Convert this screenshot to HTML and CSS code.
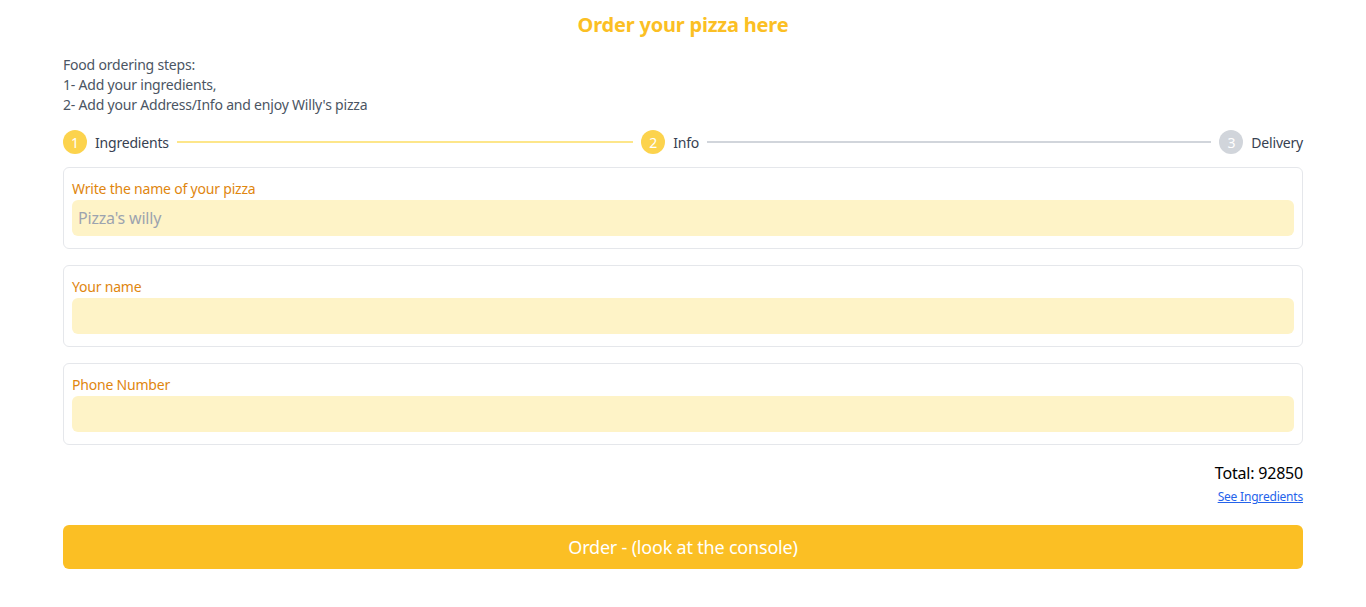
FILE: index.html
```html
<!DOCTYPE html>
<html lang="en">
<head>
<meta charset="utf-8">
<title>Order your pizza</title>
<link rel="stylesheet" href="styles.css">
</head>
<body>
<main class="page">
  <h1 class="title">Order your pizza here</h1>
  <div class="intro">
    <p>Food ordering steps:</p>
    <p>1- Add your ingredients,</p>
    <p>2- Add your Address/Info and enjoy Willy's pizza</p>
  </div>
  <div class="stepper">
    <div class="step grow"><span class="dot active">1</span><span class="step-label">Ingredients</span><span class="bar active"></span></div>
    <div class="step grow"><span class="dot active">2</span><span class="step-label">Info</span><span class="bar"></span></div>
    <div class="step"><span class="dot">3</span><span class="step-label">Delivery</span></div>
  </div>
  <div class="card">
    <label class="field-label">Write the name of your pizza</label>
    <input class="field-input" type="text" placeholder="Pizza's willy">
  </div>
  <div class="card">
    <label class="field-label">Your name</label>
    <input class="field-input" type="text">
  </div>
  <div class="card">
    <label class="field-label">Phone Number</label>
    <input class="field-input" type="text">
  </div>
  <div class="summary">
    <div class="total">Total: 92850</div>
    <a class="see" href="#">See Ingredients</a>
  </div>
  <button class="order">Order - (look at the console)</button>
</main>
</body>
</html>
```
FILE: styles.css
```css
* { box-sizing: border-box; }
body {
  margin: 0;
  background: #fff;
  font-family: "Noto Sans", "Open Sans", sans-serif;
  color: #4b5563;
  letter-spacing: -0.2px;
}
.page {
  width: 1240px;
  margin: 0 auto;
  padding-top: 11px;
  display: flex;
  flex-direction: column;
}
.title {
  margin: 0;
  text-align: center;
  font-size: 20px;
  line-height: 28px;
  font-weight: 700;
  color: #fbbf24;
}
.intro {
  margin-top: 16px;
  font-size: 14px;
  line-height: 20px;
}
.intro p { margin: 0; }
.stepper {
  margin-top: 15px;
  display: flex;
  align-items: center;
  gap: 8px;
  height: 24px;
}
.step {
  display: flex;
  align-items: center;
  gap: 8px;
  font-size: 14px;
  color: #374151;
}
.step.grow { flex: 1; }
.dot {
  flex: none;
  width: 24px;
  height: 24px;
  border-radius: 50%;
  background: #d1d5db;
  color: #fff;
  font-size: 14px;
  display: flex;
  align-items: center;
  justify-content: center;
}
.dot.active { background: #fcd34d; }
.bar {
  flex: 1;
  height: 2px;
  background: #d1d5db;
}
.bar.active { background: #fde68a; }
.card {
  margin-top: 13px;
  border: 1px solid #e5e7eb;
  border-radius: 6px;
  padding: 11px 8px 12px 8px;
  display: flex;
  flex-direction: column;
  gap: 1px;
}
.card + .card { margin-top: 16px; }
.field-label {
  font-size: 14px;
  line-height: 20px;
  color: #e0860f;
}
.field-input {
  height: 36px;
  border: none;
  border-radius: 6px;
  background: #fef3c7;
  padding: 0 6px;
  font-family: inherit;
  font-size: 16px;
  letter-spacing: inherit;
  color: #374151;
  outline: none;
}
.field-input::placeholder { color: #9ca3af; }
.summary {
  margin-top: 16px;
  display: flex;
  flex-direction: column;
  align-items: flex-end;
}
.total {
  font-size: 16px;
  line-height: 24px;
  color: #000;
}
.see {
  margin-top: 4px;
  font-size: 12px;
  line-height: 16px;
  color: #2563eb;
  text-decoration: underline;
}
.order {
  margin-top: 20px;
  height: 44px;
  border: none;
  border-radius: 6px;
  background: #fbbf24;
  color: #fff;
  font-family: inherit;
  letter-spacing: inherit;
  font-size: 18px;
}
```
